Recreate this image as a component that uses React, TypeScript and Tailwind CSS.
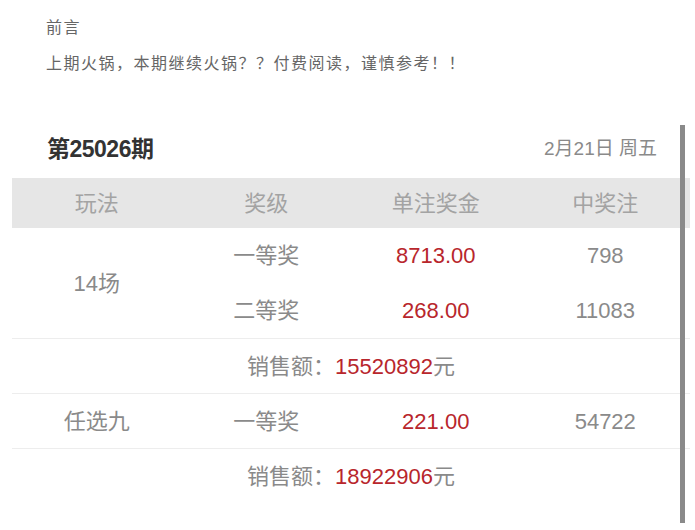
const font = { fontFamily: '"Liberation Sans", "Noto Sans CJK SC", sans-serif' };

const rows = [
  { level: "一等奖", prize: "8713.00", count: "798" },
  { level: "二等奖", prize: "268.00", count: "11083" },
];

const SalesRow = ({ amount }: { amount: string }) => (
  <div className="col-span-4 h-[55px] flex items-center justify-center border-t border-[#ededed] text-[22px] text-[#8a8a8a]">
    销售额：<span className="text-[#b8262c]">{amount}</span>元
  </div>
);

export default function App() {
  return (
    <div className="relative w-[695px] h-[530px] overflow-hidden bg-white" style={font}>
      <div className="px-[46px] pt-[13px] text-[16px] leading-[26px] tracking-[1.5px] text-[#666]" style={{ fontFamily: '"Noto Sans CJK SC", sans-serif' }}>
        <p>前言</p>
        <p className="mt-[10px]">上期火锅，本期继续火锅？？付费阅读，谨慎参考！！</p>
      </div>

      <div className="ml-[12px] mt-[45px] w-[678px]">
        <div className="h-[58px] flex items-center justify-between pl-[35px] pr-[33px]">
          <span className="text-[23px] font-bold text-[#333] tracking-[-0.5px]">第25026期</span>
          <span className="text-[19px] text-[#8a8a8a]">2月21日 周五</span>
        </div>

        <div className="grid grid-cols-4 h-[50px] items-center bg-[#e6e6e6] text-[22px] text-[#a3a3a3] text-center">
          <span>玩法</span>
          <span>奖级</span>
          <span>单注奖金</span>
          <span>中奖注</span>
        </div>

        <div className="grid grid-cols-4 text-center text-[22px] text-[#8a8a8a]">
          <div className="row-span-2 flex items-center justify-center">14场</div>
          {rows.map((r) => (
            <div key={r.level} className="col-span-3 grid grid-cols-3 h-[55px] items-center">
              <span>{r.level}</span>
              <span className="text-[#b8262c]">{r.prize}</span>
              <span>{r.count}</span>
            </div>
          ))}
          <SalesRow amount="15520892" />
          <div className="col-span-4 grid grid-cols-4 h-[55px] items-center border-t border-[#ededed]">
            <span>任选九</span>
            <span>一等奖</span>
            <span className="text-[#b8262c]">221.00</span>
            <span>54722</span>
          </div>
          <SalesRow amount="18922906" />
        </div>
      </div>

      <div className="absolute left-[680px] top-[125px] w-[5px] h-[398px] bg-[#8a8a8a]" />
    </div>
  );
}
